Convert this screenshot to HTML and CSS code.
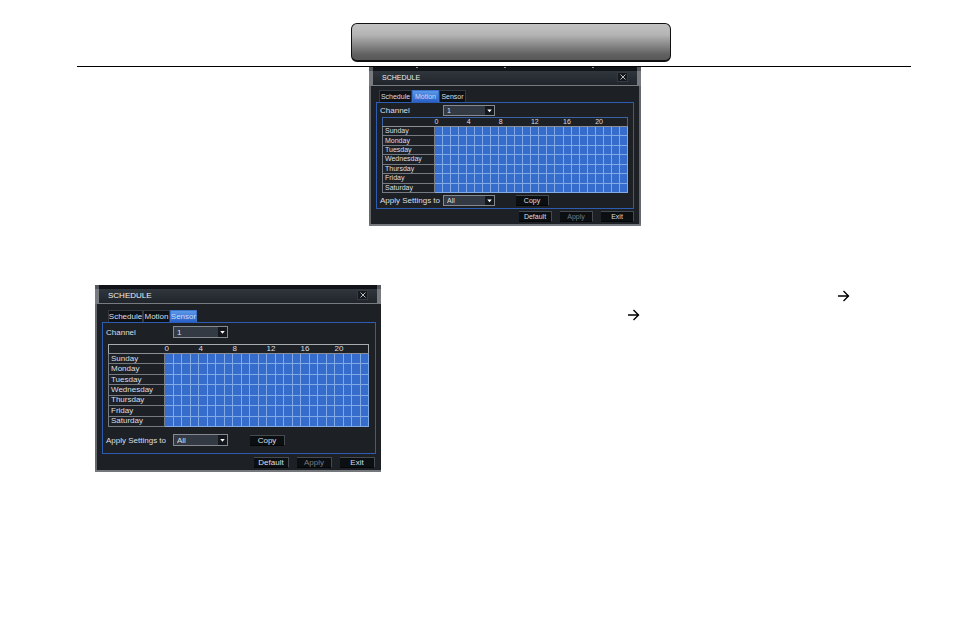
FILE: index.html
```html
<!DOCTYPE html>
<html lang="en">
<head>
<meta charset="utf-8">
<title>Schedule</title>
<link rel="stylesheet" href="styles.css">
</head>
<body>
<header class="page-head"><div class="banner"></div></header>
<main>
  <section class="window window-motion" aria-label="Motion schedule">
    <div class="strip"><i></i><i></i><i></i></div>
    <div class="titlebar">
      <h2>SCHEDULE</h2>
      <button class="close" aria-label="Close"><svg viewBox="0 0 8 8"><path d="M1.5 1.5l5 5M6.5 1.5l-5 5"/></svg></button>
    </div>
    <div class="content">
      <nav class="tabs"><button>Schedule</button><button class="active">Motion</button><button>Sensor</button></nav>
      <div class="panel">
        <div class="field">
          <label for="m-channel">Channel</label>
          <span class="picker"><select id="m-channel"><option>1</option></select><svg viewBox="0 0 10 10"><path d="M2.5 4h5L5 7z"/></svg></span>
        </div>
        <table>
          <colgroup><col class="day"><col span="24"></colgroup>
          <thead><tr><th></th><th colspan="4">0</th><th colspan="4">4</th><th colspan="4">8</th><th colspan="4">12</th><th colspan="4">16</th><th colspan="4">20</th></tr></thead>
          <tbody></tbody>
        </table>
        <div class="field apply">
          <label for="m-apply">Apply Settings to</label>
          <span class="picker"><select id="m-apply"><option>All</option></select><svg viewBox="0 0 10 10"><path d="M2.5 4h5L5 7z"/></svg></span>
          <button class="btn copy">Copy</button>
        </div>
      </div>
      <div class="actions"><button class="btn">Default</button><button class="btn" disabled>Apply</button><button class="btn">Exit</button></div>
    </div>
  </section>

  <div class="row">
    <section class="window window-sensor" aria-label="Sensor schedule">
      <div class="strip"></div>
      <div class="titlebar">
        <h2>SCHEDULE</h2>
        <button class="close" aria-label="Close"><svg viewBox="0 0 8 8"><path d="M1.5 1.5l5 5M6.5 1.5l-5 5"/></svg></button>
      </div>
      <div class="content">
        <nav class="tabs"><button>Schedule</button><button>Motion</button><button class="active">Sensor</button></nav>
        <div class="panel">
          <div class="field">
            <label for="s-channel">Channel</label>
            <span class="picker"><select id="s-channel"><option>1</option></select><svg viewBox="0 0 10 10"><path d="M2.5 4h5L5 7z"/></svg></span>
          </div>
          <table>
            <colgroup><col class="day"><col span="24"></colgroup>
            <thead><tr><th></th><th colspan="4">0</th><th colspan="4">4</th><th colspan="4">8</th><th colspan="4">12</th><th colspan="4">16</th><th colspan="4">20</th></tr></thead>
            <tbody></tbody>
          </table>
          <div class="field apply">
            <label for="s-apply">Apply Settings to</label>
            <span class="picker"><select id="s-apply"><option>All</option></select><svg viewBox="0 0 10 10"><path d="M2.5 4h5L5 7z"/></svg></span>
            <button class="btn copy">Copy</button>
          </div>
        </div>
        <div class="actions"><button class="btn">Default</button><button class="btn" disabled>Apply</button><button class="btn">Exit</button></div>
      </div>
    </section>
    <div class="steps">
      <svg class="arrow arrow-far" viewBox="0 0 12 12"><path d="M0 6h11M5.5 1l5 5-5 5"/></svg>
      <svg class="arrow arrow-near" viewBox="0 0 12 12"><path d="M0 6h11M5.5 1l5 5-5 5"/></svg>
    </div>
  </div>
</main>
<script src="script.js"></script>
</body>
</html>
```
FILE: script.js
```js
const days = ["Sunday", "Monday", "Tuesday", "Wednesday", "Thursday", "Friday", "Saturday"];

document.querySelectorAll("tbody").forEach((body) => {
  days.forEach((day) => {
    const row = body.insertRow();
    const head = document.createElement("th");
    head.scope = "row";
    head.textContent = day;
    row.append(head);
    for (let hour = 0; hour < 24; hour++) row.insertCell();
  });
});
```
FILE: styles.css
```css
* { box-sizing: border-box; }
body { margin: 0; background: #fff; font-family: "Liberation Sans", Arial, sans-serif; }
button, select { font: inherit; color: inherit; margin: 0; padding: 0; border: 0; }

.page-head { margin: 0 43px 0 77px; padding: 23px 0 4px; border-bottom: 1px solid #000; }
.banner {
  width: 320px; height: 39px; margin-left: 274px;
  border: 1px solid #111; border-bottom-width: 2px; border-radius: 6px;
  background: linear-gradient(#c2c2c2, #b4b4b4 30%, #606060 85%, #585858);
}

.window { background: #1d2126; color: #dcdfe2; border-bottom: 2px solid #74787c; }
.window-motion { width: 272px; margin-left: 369px; font-size: 7px; }
.window-sensor { width: 286px; font-size: 8px; }
.row { display: flex; margin: 59px 43px 0 95px; }

.strip { display: flex; justify-content: space-around; height: 4px; background: #101317; border: solid #55595d; border-width: 0 4px; }
.strip i { width: 2px; height: 1px; background: #90959a; }
.titlebar {
  display: flex; align-items: center; justify-content: space-between;
  height: 15px; padding: 0 9px 2px;
  border: solid #777b7f; border-width: 0 4px 1px;
  background: linear-gradient(#30363d, #20252b);
}
h2 { margin: 0; font-size: inherit; font-weight: normal; color: #eceef0; }
.close { display: flex; align-items: center; justify-content: center; width: 11px; height: 10px; background: #15181c; border: 1px solid #343a40; }
.close svg { width: 8px; height: 8px; stroke: #b8bbbe; fill: none; }

.content { border-left: 2px solid #65696d; border-right: 2px solid #65696d; padding: 4px 5px 2px; }
.window-sensor .content { padding: 6px 3px 2px 5px; border-right-color: #1d2126; }
.tabs { display: flex; padding-left: 3px; }
.tabs button { width: 27px; height: 12px; background: #0d1014; border: 1px solid #343a42; border-bottom: 0; white-space: nowrap; display: flex; align-items: center; justify-content: center; }
.tabs button:first-child { width: 33px; }
.window-sensor .tabs { padding-left: 6px; }
.window-sensor .tabs button:first-child { width: 35px; }
.tabs .active { background: linear-gradient(#5b98e8, #2860c8); border-color: #3a72cc; color: #c9dcf6; }

.panel { border: 1px solid #2d5cb0; height: 107px; padding: 2px 5px 0; }
.window-sensor .panel { height: 132px; padding: 3px 6px 0 5px; }
.field { display: flex; align-items: center; height: 11px; margin-left: -2px; white-space: nowrap; }
.field label { width: 63px; font-size: 8px; }
.window-sensor .field { height: 12px; }
.window-sensor .field label { width: 67px; }
.picker { display: flex; position: relative; width: 52px; height: 100%; }
.window-sensor .picker { width: 55px; }
.picker select { appearance: none; width: 100%; padding-left: 3px; background: #343a44; border: 1px solid #858a90; border-radius: 0; }
.picker svg { position: absolute; right: 1px; top: 1px; width: 9px; height: calc(100% - 2px); background: #14171b; fill: #fff; pointer-events: none; }

table { width: 100%; height: 76px; margin-top: 1px; border-collapse: collapse; table-layout: fixed; border: 1px solid #3a62a4; }
.window-sensor table { height: 83px; margin-top: 6px; border-color: #a7acb1; }
.day { width: 52px; }
.window-sensor .day { width: 56px; }
th, td { padding: 0; line-height: 8px; }
th { text-align: left; font-weight: normal; }
thead th { border-bottom: 1px solid #8b9096; }
tbody th { padding-left: 2px; border: 1px solid #767b82; }
td { background: #366dcc; border: 1px solid #82aae4; }

.apply { margin-top: 2px; }
.window-sensor .apply { margin-top: 7px; }
.btn {
  width: 33px; height: 11px; background: #0c0f12;
  border: solid #464b51; border-width: 1px 1px 1px 0; border-bottom-color: #050607;
  display: flex; align-items: center; justify-content: center;
}
.window-sensor .btn { width: 35px; }
.btn:disabled { color: #777b80; }
.copy { margin-left: 21px; }
.window-sensor .copy { margin-left: 22px; }
.actions { display: flex; justify-content: flex-end; gap: 8px; padding-top: 2px; }
.window-sensor .actions { padding: 3px 1px 0 0; }

.steps { flex: 1; padding-top: 5px; }
.arrow { display: block; width: 12px; height: 12px; fill: none; stroke: #000; stroke-width: 1.4; }
.arrow-far { margin-left: 457px; }
.arrow-near { margin: 7px 0 0 247px; }
```
